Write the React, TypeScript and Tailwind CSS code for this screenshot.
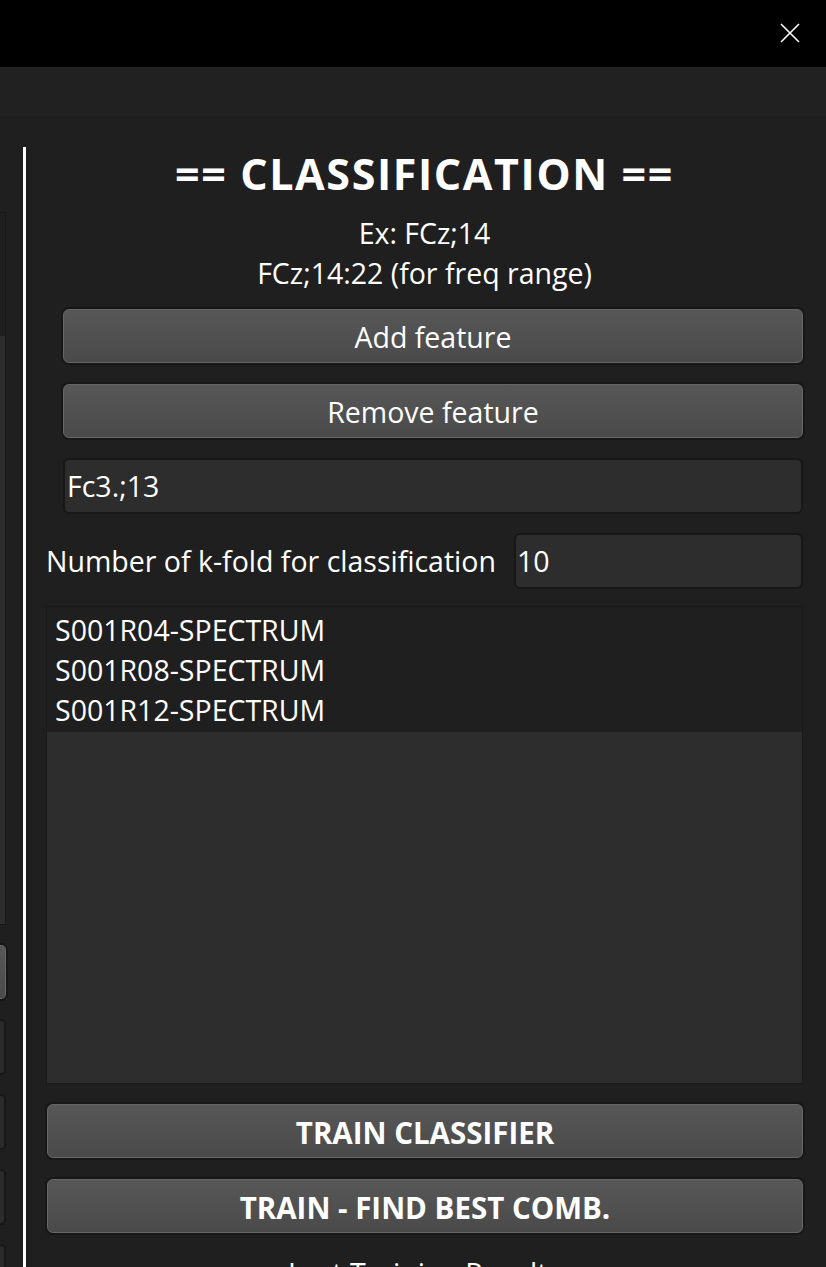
import React from 'react'

const font = { fontFamily: '"Open Sans", "Noto Sans", sans-serif' }

function GreyButton({ label, bold = false }: { label: string; bold?: boolean }) {
  return (
    <button
      className={`shrink-0 h-[54px] w-full rounded-[6px] border border-[#666666] bg-linear-to-b from-[#575757] to-[#4a4a4a] shadow-[0_0_0_2px_#171717] text-white leading-none flex items-center justify-center pt-[3px] ${
        bold ? 'font-bold text-[29.5px]' : 'font-normal text-[28.5px]'
      }`}
    >
      {label}
    </button>
  )
}

export default function App() {
  const runs = ['S001R04-SPECTRUM', 'S001R08-SPECTRUM', 'S001R12-SPECTRUM']

  return (
    <div className="w-[826px] h-[1267px] overflow-hidden bg-[#1f1f1f] flex flex-col text-white" style={font}>
      {/* Window title bar */}
      <div className="h-[67px] bg-black flex items-center justify-end pr-[25px] shrink-0">
        <svg width="22" height="22" viewBox="0 0 22 22" className="mb-[2px]">
          <path d="M2 2 L20 20 M20 2 L2 20" stroke="#ffffff" strokeWidth="1.6" />
        </svg>
      </div>

      {/* Toolbar strip */}
      <div className="h-[49px] bg-[#212121] shrink-0" />

      <div className="flex flex-1 min-h-0 overflow-hidden">
        {/* Cut-off left panel */}
        <div className="w-[23px] shrink-0 overflow-hidden flex flex-col pt-[96px]">
          <div className="shrink-0 w-[6px] h-[713px] border border-l-0 border-[#171717] flex flex-col">
            <div className="h-[123px] bg-[#1f1f1f]" />
            <div className="flex-1 bg-[#2d2d2d]" />
          </div>
          <div className="shrink-0 mt-[20px] w-[6px] h-[54px] rounded-r-[5px] border border-l-0 border-[#666666] bg-linear-to-b from-[#575757] to-[#4a4a4a] shadow-[0_0_0_2px_#171717]" />
          <div className="shrink-0 mt-[20px] w-[6px] h-[56px] rounded-r-[5px] border-2 border-l-0 border-[#171717] bg-[#2b2b2b]" />
          <div className="shrink-0 mt-[19px] w-[6px] h-[56px] rounded-r-[5px] border-2 border-l-0 border-[#171717] bg-[#2b2b2b]" />
          <div className="shrink-0 mt-[19px] w-[6px] h-[56px] rounded-r-[5px] border-2 border-l-0 border-[#171717] bg-[#2b2b2b]" />
          <div className="shrink-0 mt-[19px] w-[6px] h-[56px] rounded-r-[5px] border-2 border-l-0 border-[#171717] bg-[#2b2b2b]" />
        </div>

        {/* Divider */}
        <div className="w-[3px] bg-white mt-[31px] shrink-0" />

        {/* Classification panel */}
        <div className="flex-1 flex flex-col pl-[20px] pr-[23px] pt-[33px]">
          <h1 className="shrink-0 text-center text-[43px] font-bold leading-[50px] tracking-[1.6px]">== CLASSIFICATION ==</h1>
          <div className="shrink-0 mt-[14px] text-center text-[28.5px] leading-[40px]">
            <p>Ex: FCz;14</p>
            <p>FCz;14:22 (for freq range)</p>
          </div>

          <div className="shrink-0 mt-[16px] pl-[17px] flex flex-col">
            <GreyButton label="Add feature" />
            <div className="mt-[21px]">
              <GreyButton label="Remove feature" />
            </div>
            <div className="mt-[20px] h-[56px] rounded-[6px] border-2 border-[#171717] bg-[#2d2d2d] flex items-center pl-[2px] text-[28.5px]">
              Fc3.;13
            </div>
          </div>

          <div className="shrink-0 mt-[19px] flex items-center">
            <span className="text-[28.5px] leading-none whitespace-nowrap">Number of k-fold for classification</span>
            <div className="ml-auto w-[289px] h-[56px] rounded-[6px] border-2 border-[#171717] bg-[#2d2d2d] flex items-center pl-[1px] text-[28.5px]">
              10
            </div>
          </div>

          <div className="shrink-0 mt-[17px] h-[478px] border border-[#1a1a1a] bg-[#2d2d2d] flex flex-col">
            <div className="bg-[#1f1f1f] pt-[3px] pb-[2px] pl-[8px]">
              {runs.map((r) => (
                <div key={r} className="h-[40px] flex items-center text-[28.5px]">
                  {r}
                </div>
              ))}
            </div>
          </div>

          <div className="shrink-0 mt-[20px] pl-[1px] flex flex-col">
            <GreyButton label="TRAIN CLASSIFIER" bold />
            <div className="mt-[21px]">
              <GreyButton label="TRAIN - FIND BEST COMB." bold />
            </div>
          </div>

          <p className="shrink-0 mt-[20px] text-center text-[28.5px] leading-[40px]">Last Training Results</p>
        </div>
      </div>
    </div>
  )
}
